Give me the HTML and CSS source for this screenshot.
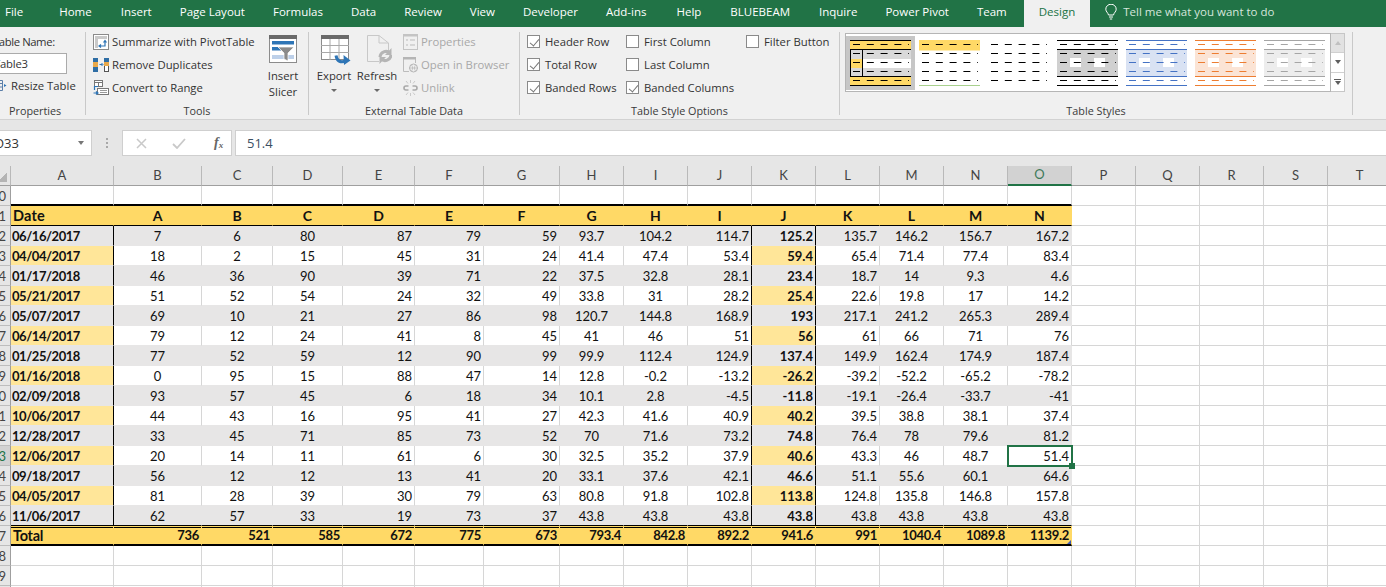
FILE: index.html
```html
<!DOCTYPE html>
<html lang="en">
<head>
<meta charset="utf-8">
<title>Table3 - Excel</title>
<link rel="stylesheet" href="styles.css">
</head>
<body>
<svg class="defs" width="0" height="0" aria-hidden="true">
  <symbol id="dashes" viewBox="0 0 61 46">
    <g stroke="currentColor" stroke-width="1" stroke-dasharray="7 6.8" fill="none">
      <path d="M3 4.500H59M3 13.500H59M3 22.500H59M3 31.500H59M3 40.500H59"/>
    </g>
  </symbol>
  <symbol id="rules" viewBox="0 0 61 46">
    <path d="M0 .5H61M0 9.500H61M0 36.500H61M0 45.500H61" stroke="currentColor" stroke-width="1" fill="none"/>
  </symbol>
  <symbol id="cut" viewBox="0 0 61 46">
    <rect x="13" y="18" width="11" height="9" fill="#fff"/>
    <rect x="37" y="18" width="11" height="9" fill="#fff"/>
  </symbol>
</svg>

<header class="tabs">
  <span class="tab tab-file">File</span>
  <span class="tab">Home</span>
  <span class="tab tab-insert">Insert</span>
  <span class="tab">Page Layout</span>
  <span class="tab">Formulas</span>
  <span class="tab">Data</span>
  <span class="tab">Review</span>
  <span class="tab">View</span>
  <span class="tab">Developer</span>
  <span class="tab">Add-ins</span>
  <span class="tab tab-help">Help</span>
  <span class="tab tab-bb">BLUEBEAM</span>
  <span class="tab tab-bb">Inquire</span>
  <span class="tab">Power Pivot</span>
  <span class="tab tab-team">Team</span>
  <span class="tab tab-active">Design</span>
  <span class="tell">
    <svg class="bulb" width="12" height="16" viewBox="0 0 12 16"><path d="M3.500 11C3 8.500.8 7.800.8 5.200a5.200 5 0 0 1 10.400 0C11.200 7.800 9 8.500 8.500 11ZM4 13H8M4.800 15H7.200" fill="none" stroke="#fff" stroke-width="1"/></svg>
    Tell me what you want to do
  </span>
</header>

<section class="ribbon">
  <div class="group g-props">
    <div class="body props-body">
      <div class="row clip-name">Table Name:</div>
      <div class="name-input">Table3</div>
      <div class="row resize">
        <svg width="12" height="15" viewBox="0 0 12 15"><path d="M-6 2.500H7.500V12.500H-6M-6 5.500H7.500M-6 9H7.500M3 2.500V12.500" fill="none" stroke="#5c7fa8"/><path d="M9 6L11.500 7.500L9 9Z" fill="#2e75b6"/></svg>
        <span>Resize Table</span>
      </div>
    </div>
    <div class="label">Properties</div>
  </div>
  <i class="sep"></i>

  <div class="group g-tools">
    <div class="body tools-body">
      <div class="list list-tools">
        <div class="row">
          <svg class="ico" width="16" height="16" viewBox="0 0 16 16"><rect x=".5" y=".5" width="15" height="15" fill="#fff" stroke="#8a8a8a"/><rect x="2" y="2" width="3" height="12" fill="#c9c9c9"/><rect x="2" y="2" width="12" height="3" fill="#c9c9c9"/><path d="M6.500 12H12V7M10.500 8.500L12 6.500L13.500 8.500M8 10.500L6 12L8 13.500" fill="none" stroke="#2e75b6" stroke-width="1.200"/></svg>
          <span>Summarize with PivotTable</span>
        </div>
        <div class="row">
          <svg class="ico" width="16" height="16" viewBox="0 0 16 16"><rect x="0" y="1" width="5" height="14" fill="#2f6ea5"/><rect x="0" y="5" width="5" height="5" fill="#e9a94b"/><rect x="11.500" y="1.500" width="4" height="13" fill="#fff" stroke="#555"/><rect x="11" y="1" width="5" height="4" fill="#2f6ea5"/><rect x="11" y="5" width="5" height="4" fill="#e9a94b"/><path d="M6.500 7.500H9.500M8.500 6L10 7.500L8.500 9" fill="none" stroke="#2e75b6"/></svg>
          <span>Remove Duplicates</span>
        </div>
        <div class="row">
          <svg class="ico" width="16" height="16" viewBox="0 0 16 16"><rect x="1.500" y=".5" width="8" height="6" fill="#fff" stroke="#777"/><path d="M1.500 2.500H9.500M5.500 2.500V6.500" stroke="#777"/><rect x="4.500" y="8.500" width="11" height="6" fill="#fff" stroke="#777"/><path d="M7 10.500H14M7 12.500H14" stroke="#9a9a9a"/><path d="M5 6.500H1.500V10M.5 13H4M3 11.500L5 13L3 14.500" fill="none" stroke="#2e75b6" stroke-width="1.200"/></svg>
          <span>Convert to Range</span>
        </div>
      </div>
      <div class="big big-slicer">
        <svg width="28" height="28" viewBox="0 0 28 28"><rect x=".5" y=".5" width="27" height="27" fill="#fff" stroke="#8c8c8c"/><rect width="28" height="4" fill="#6a6a6a"/><rect x="3" y="6" width="22" height="3.500" fill="#2e75b6"/><rect x="3" y="12" width="9" height="3.500" fill="#2e75b6"/><rect x="3" y="20" width="22" height="4" fill="#bdd0e9"/><path d="M9 12H25L19 18V26L15 24V18Z" fill="#8a8a8a" stroke="#fff" stroke-width=".7"/></svg>
        <span>Insert<br>Slicer</span>
      </div>
    </div>
    <div class="label">Tools</div>
  </div>
  <i class="sep"></i>

  <div class="group g-ext">
    <div class="body ext-body">
      <div class="big big-ext">
        <svg class="export-ico" width="30" height="30" viewBox="0 0 30 30"><rect x=".5" y=".5" width="27" height="24" fill="#fff" stroke="#8c8c8c"/><rect width="28" height="4" fill="#6a6a6a"/><path d="M0 10.500H28M0 17.500H28M9 4V25M18 4V25" stroke="#a8a8a8"/><path d="M15 20.500C16 27 20 27.500 25 26" fill="none" stroke="#2e75b6" stroke-width="3"/><path d="M22.500 20L29.500 25.500L23 30Z" fill="#2e75b6"/></svg>
        <span>Export</span>
        <i class="caret"></i>
      </div>
      <div class="big big-ext">
        <svg width="30" height="30" viewBox="0 0 30 30"><path d="M5.500 .5H17L26.500 8V17M5.500 .5V26.500H17M17 .5V8H26.500" fill="none" stroke="#c8c8c8"/><path d="M18 22a6 6 0 0 1 10-4M29 20a6 6 0 0 1-10 4" fill="none" stroke="#b5b5b5" stroke-width="3"/><path d="M29.500 13V20H23ZM17.500 29V22H24Z" fill="#b5b5b5"/></svg>
        <span>Refresh</span>
        <i class="caret"></i>
      </div>
      <div class="list list-ext">
        <div class="row off">
          <svg class="ico" width="15" height="16" viewBox="0 0 15 16"><rect x=".5" y=".5" width="14" height="15" fill="none" stroke="#c4c4c4"/><rect y="0" width="15" height="2.500" fill="#c4c4c4"/><path d="M3 6H5M3 11H5M7 6H12M7 11H12" stroke="#bbb"/></svg>
          <span>Properties</span>
        </div>
        <div class="row off">
          <svg class="ico" width="15" height="16" viewBox="0 0 15 16"><path d="M.5 14.500V.5H12.500V6M.5 14.500H6" fill="none" stroke="#bcbcbc"/><rect width="13" height="2.500" fill="#b5b5b5"/><circle cx="10.500" cy="11" r="4" fill="none" stroke="#b5b5b5"/><path d="M6.500 11H14.500M8.500 8C10 10 10 12 8.500 14M12.500 8C11 10 11 12 12.500 14" fill="none" stroke="#b5b5b5" stroke-width=".7"/></svg>
          <span>Open in Browser</span>
        </div>
        <div class="row off">
          <svg class="ico" width="15" height="16" viewBox="0 0 15 16"><path d="M5.500 6H3a2 2 0 0 0 0 4H5.500M9.500 6H12a2 2 0 0 1 0 4H9.500" fill="none" stroke="#a9a9a9" stroke-width="1.600"/><path d="M7.500 0V3M3 1L5 3.500M12 1L10 3.500M7.500 13V16M3 15L5 12.500M12 15L10 12.500" stroke="#c9c9c9"/></svg>
          <span>Unlink</span>
        </div>
      </div>
    </div>
    <div class="label">External Table Data</div>
  </div>
  <i class="sep"></i>

  <div class="group g-opts">
    <div class="body opts-body">
      <div class="list opt-a">
        <label class="row"><i class="box on"></i>Header Row</label>
        <label class="row"><i class="box on"></i>Total Row</label>
        <label class="row"><i class="box on"></i>Banded Rows</label>
      </div>
      <div class="list opt-b">
        <label class="row"><i class="box"></i>First Column</label>
        <label class="row"><i class="box"></i>Last Column</label>
        <label class="row"><i class="box on"></i>Banded Columns</label>
      </div>
      <div class="list">
        <label class="row"><i class="box"></i>Filter Button</label>
      </div>
    </div>
    <div class="label">Table Style Options</div>
  </div>
  <i class="sep"></i>

  <div class="group g-styles">
    <div class="body styles-body">
      <div class="gallery">
        <div class="thumb thumb-sel">
          <svg width="61" height="46" viewBox="0 0 61 46">
            <rect width="61" height="46" fill="#fff"/>
            <rect width="61" height="9.500" fill="#ffd966"/><rect y="36.500" width="61" height="9.500" fill="#ffd966"/>
            <rect y="10" width="61" height="9" fill="#d9d9d9"/><rect y="28" width="61" height="8.500" fill="#d9d9d9"/>
            <rect y="19" width="12" height="9" fill="#ffd966"/>
            <use href="#dashes" class="c-black" width="61" height="46"/>
            <use href="#rules" class="c-black" width="61" height="46"/>
            <path d="M.5 9.500V36.500M12.500 9.500V36.500" stroke="#000" fill="none"/>
          </svg>
        </div>
        <div class="thumb">
          <svg width="61" height="46" viewBox="0 0 61 46">
            <rect width="61" height="10.500" fill="#ffd966"/>
            <use href="#dashes" class="c-black" width="61" height="46"/>
            <path d="M0 45.500H61" stroke="#a9d18e"/>
          </svg>
        </div>
        <div class="thumb">
          <svg width="61" height="46" viewBox="0 0 61 46"><use href="#dashes" class="c-black" width="61" height="46"/></svg>
        </div>
        <div class="thumb">
          <svg width="61" height="46" viewBox="0 0 61 46">
            <rect y="10" width="61" height="26" class="b-grey"/>
            <use href="#cut" width="61" height="46"/>
            <use href="#dashes" class="c-black" width="61" height="46"/>
            <use href="#rules" class="c-black" width="61" height="46"/>
          </svg>
        </div>
        <div class="thumb">
          <svg width="61" height="46" viewBox="0 0 61 46">
            <rect y="10" width="61" height="26" class="b-blue"/>
            <use href="#cut" width="61" height="46"/>
            <use href="#dashes" class="c-blue" width="61" height="46"/>
            <use href="#rules" class="c-blue" width="61" height="46"/>
          </svg>
        </div>
        <div class="thumb">
          <svg width="61" height="46" viewBox="0 0 61 46">
            <rect y="10" width="61" height="26" class="b-orange"/>
            <use href="#cut" width="61" height="46"/>
            <use href="#dashes" class="c-orange" width="61" height="46"/>
            <use href="#rules" class="c-orange" width="61" height="46"/>
          </svg>
        </div>
        <div class="thumb">
          <svg width="61" height="46" viewBox="0 0 61 46">
            <rect y="10" width="61" height="26" class="b-pale"/>
            <use href="#cut" width="61" height="46"/>
            <use href="#dashes" class="c-pale" width="61" height="46"/>
            <use href="#rules" class="c-pale" width="61" height="46"/>
          </svg>
        </div>
      </div>
      <div class="scroller">
        <div class="sbtn sbtn-off"><i class="tri-up"></i></div>
        <div class="sbtn"><i class="tri-down"></i></div>
        <div class="sbtn sbtn-more"><i class="bar"></i><i class="tri-down"></i></div>
      </div>
    </div>
    <div class="label">Table Styles</div>
  </div>
  <i class="sep"></i>
</section>

<section class="formula">
  <div class="namebox"><span class="cell-ref">O33</span><i class="tri-down"></i></div>
  <div class="dots"><i></i><i></i><i></i></div>
  <div class="fxbox">
    <svg width="11" height="11" viewBox="0 0 11 11"><path d="M1 1L10 10M10 1L1 10" stroke="#c9c9c9" stroke-width="1.500"/></svg>
    <svg width="14" height="11" viewBox="0 0 14 11"><path d="M1 6L5 10L13 1" fill="none" stroke="#c9c9c9" stroke-width="1.800"/></svg>
    <span class="fx">f<sub>x</sub></span>
  </div>
  <div class="input">51.4</div>
</section>

<main class="sheet">
<table>
<colgroup><col class="w0"><col class="wa"><col class="wb"><col class="wc"><col class="wd"><col class="we"><col class="wf"><col class="wg"><col class="wn"><col class="wn"><col class="wn"><col class="wn"><col class="wn"><col class="wn"><col class="wn"><col class="wn"><col class="wn"><col class="wn"><col class="wn"><col class="wn"><col class="wn"></colgroup>
<thead><tr><th class="corner"></th><th>A</th><th>B</th><th>C</th><th>D</th><th>E</th><th>F</th><th>G</th><th>H</th><th>I</th><th>J</th><th>K</th><th>L</th><th>M</th><th>N</th><th class="sel">O</th><th>P</th><th>Q</th><th>R</th><th>S</th><th>T</th></tr></thead>
<tbody>
<tr class="blank"><th>20</th><td></td><td></td><td></td><td></td><td></td><td></td><td></td><td></td><td></td><td></td><td></td><td></td><td></td><td></td><td></td><td></td><td></td><td></td><td></td><td></td></tr>
<tr class="head"><th>21</th><td class="first">Date</td><td>A</td><td>B</td><td>C</td><td>D</td><td>E</td><td>F</td><td>G</td><td>H</td><td>I</td><td>J</td><td>K</td><td>L</td><td>M</td><td>N</td><td></td><td></td><td></td><td></td><td></td></tr>
<tr class="data grey"><th>22</th><td>06/16/2017</td><td>7</td><td>6</td><td>80</td><td>87</td><td>79</td><td>59</td><td>93.7</td><td>104.2</td><td>114.7</td><td>125.2</td><td>135.7</td><td>146.2</td><td>156.7</td><td>167.2</td><td></td><td></td><td></td><td></td><td></td></tr>
<tr class="data plain"><th>23</th><td>04/04/2017</td><td>18</td><td>2</td><td>15</td><td>45</td><td>31</td><td>24</td><td>41.4</td><td>47.4</td><td>53.4</td><td>59.4</td><td>65.4</td><td>71.4</td><td>77.4</td><td>83.4</td><td></td><td></td><td></td><td></td><td></td></tr>
<tr class="data grey"><th>24</th><td>01/17/2018</td><td>46</td><td>36</td><td>90</td><td>39</td><td>71</td><td>22</td><td>37.5</td><td>32.8</td><td>28.1</td><td>23.4</td><td>18.7</td><td>14</td><td>9.3</td><td>4.6</td><td></td><td></td><td></td><td></td><td></td></tr>
<tr class="data plain"><th>25</th><td>05/21/2017</td><td>51</td><td>52</td><td>54</td><td>24</td><td>32</td><td>49</td><td>33.8</td><td>31</td><td>28.2</td><td>25.4</td><td>22.6</td><td>19.8</td><td>17</td><td>14.2</td><td></td><td></td><td></td><td></td><td></td></tr>
<tr class="data grey"><th>26</th><td>05/07/2017</td><td>69</td><td>10</td><td>21</td><td>27</td><td>86</td><td>98</td><td>120.7</td><td>144.8</td><td>168.9</td><td>193</td><td>217.1</td><td>241.2</td><td>265.3</td><td>289.4</td><td></td><td></td><td></td><td></td><td></td></tr>
<tr class="data plain"><th>27</th><td>06/14/2017</td><td>79</td><td>12</td><td>24</td><td>41</td><td>8</td><td>45</td><td>41</td><td>46</td><td>51</td><td>56</td><td>61</td><td>66</td><td>71</td><td>76</td><td></td><td></td><td></td><td></td><td></td></tr>
<tr class="data grey"><th>28</th><td>01/25/2018</td><td>77</td><td>52</td><td>59</td><td>12</td><td>90</td><td>99</td><td>99.9</td><td>112.4</td><td>124.9</td><td>137.4</td><td>149.9</td><td>162.4</td><td>174.9</td><td>187.4</td><td></td><td></td><td></td><td></td><td></td></tr>
<tr class="data plain"><th>29</th><td>01/16/2018</td><td>0</td><td>95</td><td>15</td><td>88</td><td>47</td><td>14</td><td>12.8</td><td>-0.2</td><td>-13.2</td><td>-26.2</td><td>-39.2</td><td>-52.2</td><td>-65.2</td><td>-78.2</td><td></td><td></td><td></td><td></td><td></td></tr>
<tr class="data grey"><th>30</th><td>02/09/2018</td><td>93</td><td>57</td><td>45</td><td>6</td><td>18</td><td>34</td><td>10.1</td><td>2.8</td><td>-4.5</td><td>-11.8</td><td>-19.1</td><td>-26.4</td><td>-33.7</td><td>-41</td><td></td><td></td><td></td><td></td><td></td></tr>
<tr class="data plain"><th>31</th><td>10/06/2017</td><td>44</td><td>43</td><td>16</td><td>95</td><td>41</td><td>27</td><td>42.3</td><td>41.6</td><td>40.9</td><td>40.2</td><td>39.5</td><td>38.8</td><td>38.1</td><td>37.4</td><td></td><td></td><td></td><td></td><td></td></tr>
<tr class="data grey"><th>32</th><td>12/28/2017</td><td>33</td><td>45</td><td>71</td><td>85</td><td>73</td><td>52</td><td>70</td><td>71.6</td><td>73.2</td><td>74.8</td><td>76.4</td><td>78</td><td>79.6</td><td>81.2</td><td></td><td></td><td></td><td></td><td></td></tr>
<tr class="data plain"><th class="sel">33</th><td>12/06/2017</td><td>20</td><td>14</td><td>11</td><td>61</td><td>6</td><td>30</td><td>32.5</td><td>35.2</td><td>37.9</td><td>40.6</td><td>43.3</td><td>46</td><td>48.7</td><td class="active">51.4</td><td></td><td></td><td></td><td></td><td></td></tr>
<tr class="data grey"><th>34</th><td>09/18/2017</td><td>56</td><td>12</td><td>12</td><td>13</td><td>41</td><td>20</td><td>33.1</td><td>37.6</td><td>42.1</td><td>46.6</td><td>51.1</td><td>55.6</td><td>60.1</td><td>64.6</td><td></td><td></td><td></td><td></td><td></td></tr>
<tr class="data plain"><th>35</th><td>04/05/2017</td><td>81</td><td>28</td><td>39</td><td>30</td><td>79</td><td>63</td><td>80.8</td><td>91.8</td><td>102.8</td><td>113.8</td><td>124.8</td><td>135.8</td><td>146.8</td><td>157.8</td><td></td><td></td><td></td><td></td><td></td></tr>
<tr class="data grey last"><th>36</th><td>11/06/2017</td><td>62</td><td>57</td><td>33</td><td>19</td><td>73</td><td>37</td><td>43.8</td><td>43.8</td><td>43.8</td><td>43.8</td><td>43.8</td><td>43.8</td><td>43.8</td><td>43.8</td><td></td><td></td><td></td><td></td><td></td></tr>
<tr class="total"><th>37</th><td class="first">Total</td><td>736</td><td>521</td><td>585</td><td>672</td><td>775</td><td>673</td><td>793.4</td><td>842.8</td><td>892.2</td><td>941.6</td><td>991</td><td>1040.4</td><td>1089.8</td><td class="grip">1139.2</td><td></td><td></td><td></td><td></td><td></td></tr>
<tr class="blank"><th>38</th><td></td><td></td><td></td><td></td><td></td><td></td><td></td><td></td><td></td><td></td><td></td><td></td><td></td><td></td><td></td><td></td><td></td><td></td><td></td><td></td></tr>
<tr class="blank"><th>39</th><td></td><td></td><td></td><td></td><td></td><td></td><td></td><td></td><td></td><td></td><td></td><td></td><td></td><td></td><td></td><td></td><td></td><td></td><td></td><td></td></tr>
<tr class="blank"><th></th><td></td><td></td><td></td><td></td><td></td><td></td><td></td><td></td><td></td><td></td><td></td><td></td><td></td><td></td><td></td><td></td><td></td><td></td><td></td><td></td></tr>
</tbody>
</table>
</main>
</body>
</html>
```

FILE: styles.css
```css
* { box-sizing: border-box; }
html, body { margin: 0; padding: 0; }
body {
  width: 1386px;
  height: 587px;
  overflow: hidden;
  background: #fff;
  font-family: "Open Sans", "Noto Sans", sans-serif;
  font-size: 11.3px;
  color: #333;
}
.defs { position: absolute; }
i { font-style: normal; display: block; }

/* tab strip */
.tabs {
  display: flex;
  align-items: stretch;
  height: 27px;
  background: #217346;
  color: #fff;
  font-size: 11.5px;
  line-height: 24px;
  white-space: nowrap;
}
.tab { padding: 0 14px; }
.tab-file { padding-left: 5px; padding-right: 22px; }
.tab-insert { padding-left: 15px; }
.tab-help { padding-left: 16px; }
.tab-bb { padding-left: 15px; }
.tab-team { margin-right: 3px; }
.tab-active {
  background: #f0f0f0;
  color: #217346;
  padding: 0 15px;
}
.tell { display: flex; align-items: center; gap: 6px; margin-left: 15px; padding-bottom: 3px; color: #d5e6dc; }
.bulb { flex: none; }

/* ribbon */
.ribbon {
  display: flex;
  height: 93px;
  background: #f0f0f0;
  border-bottom: 1px solid #d2d2d2;
  white-space: nowrap;
}
.sep { width: 1px; margin: 5px 0 4px; background: #c9c9c9; flex: none; }
.group { display: flex; flex-direction: column; flex: none; }
.body { display: flex; height: 74px; padding-top: 3px; }
.label { height: 18px; line-height: 19px; text-align: center; color: #3a3a3a; font-size: 10.8px; }
.row { display: flex; align-items: center; height: 23px; flex: none; }
.list { display: flex; flex-direction: column; }
.ico { flex: none; margin-right: 3px; }
.off { color: #a8a8a8; }

.g-props { width: 85px; overflow: hidden; }
.props-body { flex-direction: column; }
.clip-name { margin-left: -7px; letter-spacing: -.4px; }
.g-props .label { text-align: left; padding-left: 9px; }
.name-input {
  width: 74px;
  height: 21px;
  margin-left: -7px;
  line-height: 19px;
  background: #fff;
  border: 1px solid #ababab;
  padding-left: 0;
  flex: none;
  letter-spacing: -.2px;
}
.resize { gap: 4px; margin-left: -5px; }
.resize svg { flex: none; }

.g-tools { width: 222px; }
.tools-body { padding-left: 7px; }
.list-tools { width: 163px; }
.big {
  display: flex;
  flex-direction: column;
  align-items: center;
  text-align: center;
  padding-top: 5px;
  line-height: 16px;
}
.big span { margin-top: 5px; }
.big-slicer { width: 42px; margin-left: 6px; }
.g-ext { width: 210px; }
.ext-body { padding-left: 5px; }
.big-ext { width: 40px; margin-right: 3px; }
.big-ext svg { flex: none; }
.big-ext span { margin-top: 3px; }
.export-ico { margin-left: 4px; }
.caret {
  width: 0; height: 0; margin-top: 5px;
  border: 3px solid transparent;
  border-top: 3px solid #6a6a6a;
  border-bottom: 0;
}
.list-ext { margin-left: 3px; }

.g-opts { width: 319px; }
.opts-body { padding-left: 7px; }
.opt-a { width: 99px; }
.opt-b { width: 120px; }
.box {
  position: relative;
  width: 13px; height: 13px;
  margin-right: 5px;
  background: #fff;
  border: 1px solid #8a8a8a;
  flex: none;
}
.box.on::after {
  content: "";
  position: absolute;
  left: 3.5px; top: 0.5px;
  width: 4px; height: 8px;
  border: solid #777;
  border-width: 0 1.5px 1.5px 0;
  transform: rotate(40deg);
}

.g-styles { width: 512px; }
.styles-body { padding: 6px 0 0 5px; }
.gallery {
  display: flex;
  width: 486px;
  height: 59px;
  padding: 2px 0 0;
  background: #fff;
  border: 1px solid #b5b5b5;
}
.thumb { width: 69px; height: 54px; padding: 4px; }
.thumb svg { display: block; }
.thumb-sel { background: #c6c6c6; }
.c-black { color: #000; }
.c-blue { color: #4472c4; }
.c-orange { color: #ed7d31; }
.c-pale { color: #a5a5a5; }
.b-grey { fill: #d0d0d0; }
.b-blue { fill: #d9e2f3; }
.b-orange { fill: #fbe4d5; }
.b-pale { fill: #ededed; }
.scroller { width: 14px; height: 59px; display: flex; flex-direction: column; border: 1px solid #c6c6c6; border-left: 0; background: #fff; }
.sbtn { flex: 1; display: flex; flex-direction: column; align-items: center; justify-content: center; gap: 1px; border-bottom: 1px solid #d0d0d0; }
.sbtn:last-child { border-bottom: 0; }
.sbtn-off { background: #e2e2e2; }
.tri-up { width: 0; height: 0; border: 3.5px solid transparent; border-top: 0; border-bottom: 4px solid #c0c0c0; }
.tri-down { width: 0; height: 0; border: 3.5px solid transparent; border-bottom: 0; border-top: 4px solid #5e5e5e; }
.bar { width: 7px; height: 1px; background: #5e5e5e; }

/* formula bar */
.formula {
  display: flex;
  height: 46px;
  padding-top: 10px;
  padding-bottom: 10px;
  background: #e6e6e6;
  font-size: 12.5px;
}
.namebox {
  display: flex;
  align-items: center;
  justify-content: space-between;
  width: 92px;
  padding-right: 7px;
  background: #fff;
  border: 1px solid #cfcfcf;
  border-left: 0;
  overflow: hidden;
}
.cell-ref { margin-left: -6px; font-size: 13px; }
.namebox .tri-down { border-top-color: #777; }
.dots { display: flex; flex-direction: column; justify-content: center; gap: 2px; width: 30px; align-items: center; }
.dots i { width: 2px; height: 2px; background: #a8a8a8; }
.fxbox {
  display: flex;
  align-items: center;
  width: 110px;
  padding-left: 13px;
  gap: 25px;
  background: #fff;
  border: 1px solid #cfcfcf;
}
.fx { font-family: "Liberation Serif", serif; font-style: italic; font-weight: bold; font-size: 14px; color: #666; margin-left: 3px; }
.fx sub { font-size: 9px; vertical-align: -1px; line-height: 0; }
.input {
  flex: 1;
  margin-left: 3px;
  padding-left: 11px;
  line-height: 24px;
  background: #fff;
  border: 1px solid #cfcfcf;
  border-right: 0;
  color: #3c4f63;
  font-size: 13px;
}

/* sheet */
.sheet { overflow: hidden; height: 421px; }
table {
  table-layout: fixed;
  width: 1392px;
  border-collapse: separate;
  border-spacing: 0;
  font-family: Lato, "Liberation Sans", sans-serif;
  font-size: 13px;
  color: #111;
  background: #fff;
}
.w0 { width: 11px; }
.wa { width: 103px; }
.wb { width: 88px; }
.wc { width: 71px; }
.wd { width: 70px; }
.we { width: 72px; }
.wf { width: 69px; }
.wg { width: 76px; }
.wn { width: 64px; }

tr { height: 20px; }
th, td {
  height: 20px;
  padding: 0 2px;
  border-right: 1px solid #d6d6d6;
  border-bottom: 1px solid #d6d6d6;
  white-space: nowrap;
}
td { text-align: right; }

thead th {
  padding-bottom: 2px;
  font-weight: normal;
  text-align: center;
  color: #444;
  background: #e6e6e6;
  border-right-color: #b9b9b9;
  border-bottom-color: #9f9f9f;
}
thead th.sel { background: #d2d2d2; color: #3f7a5a; border-bottom: 2px solid #217346; }
.corner {
  background-color: #e6e6e6;
  background-image: linear-gradient(135deg, transparent 50%, #b4b4b4 50%);
  background-repeat: no-repeat;
  background-size: 7px 12px;
  background-position: 0 4px;
}
tbody th {
  direction: rtl;
  overflow: hidden;
  padding: 0 5px 0 0;
  font-weight: normal;
  color: #444;
  background: #e6e6e6;
  border-right-color: #9f9f9f;
  border-bottom-color: #bdbdbd;
}
tbody th.sel { background: #d2d2d2; color: #217346; }

/* table header */
.head td:nth-child(-n+16), .total td:nth-child(-n+16) {
  background: #ffd966;
  border-right-color: #ffd966;
  font-weight: bold;
}
.head td:nth-child(-n+16) {
  text-align: center;
  border-bottom-color: #000;
  font-size: 14px;
}
.head td.first, .total td.first { text-align: left; font-size: 14.5px; padding-left: 2px; }
.total td:nth-child(-n+16) { letter-spacing: -.3px; }
.head td.first { letter-spacing: .2px; }
tbody tr:first-child td:nth-child(-n+16) { border-bottom: 2px solid #000; }

/* data rows */
.data td:nth-child(-n+16) { border-bottom-color: #e7e6e6; }
.grey td:nth-child(-n+16) { background: #e7e6e6; border-right-color: #e7e6e6; }
.data td:nth-child(2) { font-weight: bold; text-align: left; padding-left: 1px; letter-spacing: -.45px; border-right-color: #000; }
.plain td:nth-child(2), .plain td:nth-child(12) { background: #ffe699; }
.data td:nth-child(3), .data td:nth-child(4), .data td:nth-child(5),
.data td:nth-child(9), .data td:nth-child(10),
.data td:nth-child(14), .data td:nth-child(15) { text-align: center; }
.data td:nth-child(11) { border-right-color: #000; }
.data td:nth-child(12) { font-weight: bold; border-right-color: #000; }
.data.last td:nth-child(-n+16) { border-bottom-color: #000; }

/* totals */
.total td:nth-child(-n+16) {
  border-bottom: 2px solid #000;
  box-shadow: inset 0 1px 0 #ffd966, inset 0 2px 0 #000;
}

/* active cell */
.active { position: relative; }
.active::after {
  content: "";
  position: absolute;
  left: -1px; right: -2px; top: -1px; bottom: -2px;
  border: 2px solid #217346;
}
.active::before {
  content: "";
  position: absolute;
  right: -4px; bottom: -4px;
  width: 6px; height: 6px;
  background: #217346;
  z-index: 1;
}
.grip { position: relative; }
.grip::after {
  content: "";
  position: absolute;
  right: 0; bottom: 0;
  width: 0; height: 0;
  border-left: 4px solid transparent;
  border-bottom: 4px solid #3f5bb5;
}
```
